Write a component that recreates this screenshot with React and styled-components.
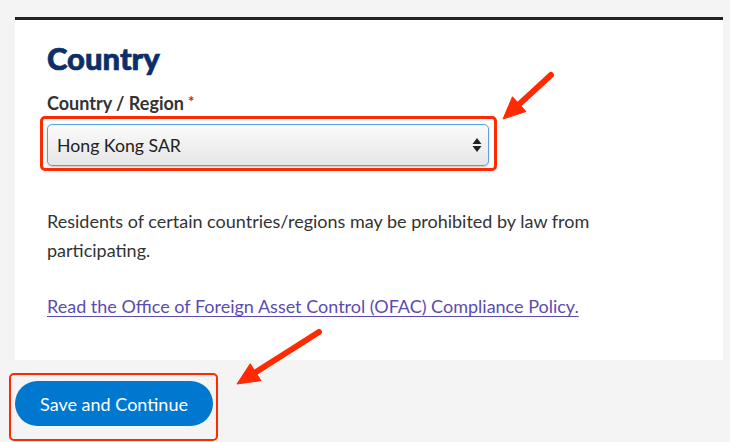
import React from "react";
import styled, { createGlobalStyle } from "styled-components";

const Global = createGlobalStyle`
  html, body {
    margin: 0;
    padding: 0;
    background: #f4f4f4;
    font-family: Lato, "Open Sans", sans-serif;
    color: #333;
  }
`;

const Page = styled.div`
  position: relative;
  width: 730px;
  height: 442px;
  padding-top: 17px;
  box-sizing: border-box;
  overflow: hidden;
`;

const Card = styled.section`
  margin-left: 15px;
  width: 708px;
  height: 343px;
  box-sizing: border-box;
  background: #fff;
  border-top: 3px solid #222;
  padding: 18px 32px 0;
`;

const Heading = styled.h2`
  margin: 0;
  font-size: 31px;
  font-weight: 900;
  color: #0b2f6a;
  line-height: 40px;
  -webkit-text-stroke: 0.7px #0b2f6a;
`;

const Label = styled.label`
  display: block;
  margin-top: 13px;
  font-size: 18px;
  font-weight: 700;
  line-height: 20px;
  color: #333;
`;

const Required = styled.span`
  color: #c4262e;
  font-size: 15px;
  vertical-align: 3px;
  margin-left: 4px;
`;

const Highlight = styled.div`
  display: inline-block;
  border: ${(p) => p.$w || 3}px solid #ff2a00;
  border-radius: 5px;
  padding: ${(p) => p.$pad};
  margin: ${(p) => p.$margin || 0};
`;

const Select = styled.div`
  width: 442px;
  height: 42px;
  box-sizing: border-box;
  display: flex;
  align-items: center;
  justify-content: space-between;
  padding: 0 6px 0 9px;
  border: 1px solid #5aa0e6;
  border-radius: 5px;
  background: linear-gradient(#fbfbfb, #e6e6e6);
  box-shadow: 0 1px 2px rgba(0, 0, 0, 0.25);
  font-size: 17.7px;
  color: #222;
`;

const Arrows = styled.svg`
  width: 10px;
  height: 16px;
`;

const Paragraph = styled.p`
  margin: 36px 0 0;
  font-size: 18px;
  line-height: 29px;
  color: #333;
  width: 570px;
`;

const Link = styled.a`
  display: block;
  margin-top: 27px;
  font-size: 18px;
  line-height: 29px;
  color: #5a4cb1;
  text-decoration: underline;
  text-underline-offset: 3px;
`;

const Footer = styled.div`
  padding: 13px 0 0 9px;
`;

const Button = styled.button`
  display: block;
  width: 198px;
  height: 45px;
  border: none;
  border-radius: 23px;
  background: #0078cf;
  color: #fff;
  font-family: Lato, sans-serif;
  font-size: 18px;
`;

const Overlay = styled.svg`
  position: absolute;
  left: 0;
  top: 0;
  pointer-events: none;
`;

const Arrow = ({ x1, y1, x2, y2 }) => {
  const dx = x2 - x1;
  const dy = y2 - y1;
  const len = Math.hypot(dx, dy);
  const ux = dx / len;
  const uy = dy / len;
  const head = 22;
  const bx = x2 - ux * head;
  const by = y2 - uy * head;
  const px = -uy * 10;
  const py = ux * 10;
  return (
    <g fill="#ff2a00" stroke="#ff2a00">
      <line x1={x1} y1={y1} x2={bx + ux * 4} y2={by + uy * 4} strokeWidth="6" strokeLinecap="round" />
      <polygon points={`${x2},${y2} ${bx + px},${by + py} ${bx - px},${by - py}`} strokeWidth="1" />
    </g>
  );
};

export default function App() {
  return (
    <Page>
      <Global />
      <Card>
        <Heading>Country</Heading>
        <Label>
          Country / Region<Required>*</Required>
        </Label>
        <Highlight $pad="5px 5px 2px 4px" $margin="3px 0 0 -7px">
          <Select>
            <span>Hong Kong SAR</span>
            <Arrows viewBox="0 0 10 16">
              <path d="M5 1 L9.5 7 H0.5 Z M5 15 L9.5 9 H0.5 Z" fill="#222" />
            </Arrows>
          </Select>
        </Highlight>
        <Paragraph>
          Residents of certain countries/regions may be prohibited by law from participating.
        </Paragraph>
        <Link href="#">Read the Office of Foreign Asset Control (OFAC) Compliance Policy.</Link>
      </Card>
      <Footer>
        <Highlight $w={2} $pad="6px 3px 13px 4px">
          <Button>Save and Continue</Button>
        </Highlight>
      </Footer>
      <Overlay width="730" height="442">
        <Arrow x1={551} y1={75} x2={503} y2={119} />
        <Arrow x1={319} y1={332} x2={237} y2={384} />
      </Overlay>
    </Page>
  );
}
